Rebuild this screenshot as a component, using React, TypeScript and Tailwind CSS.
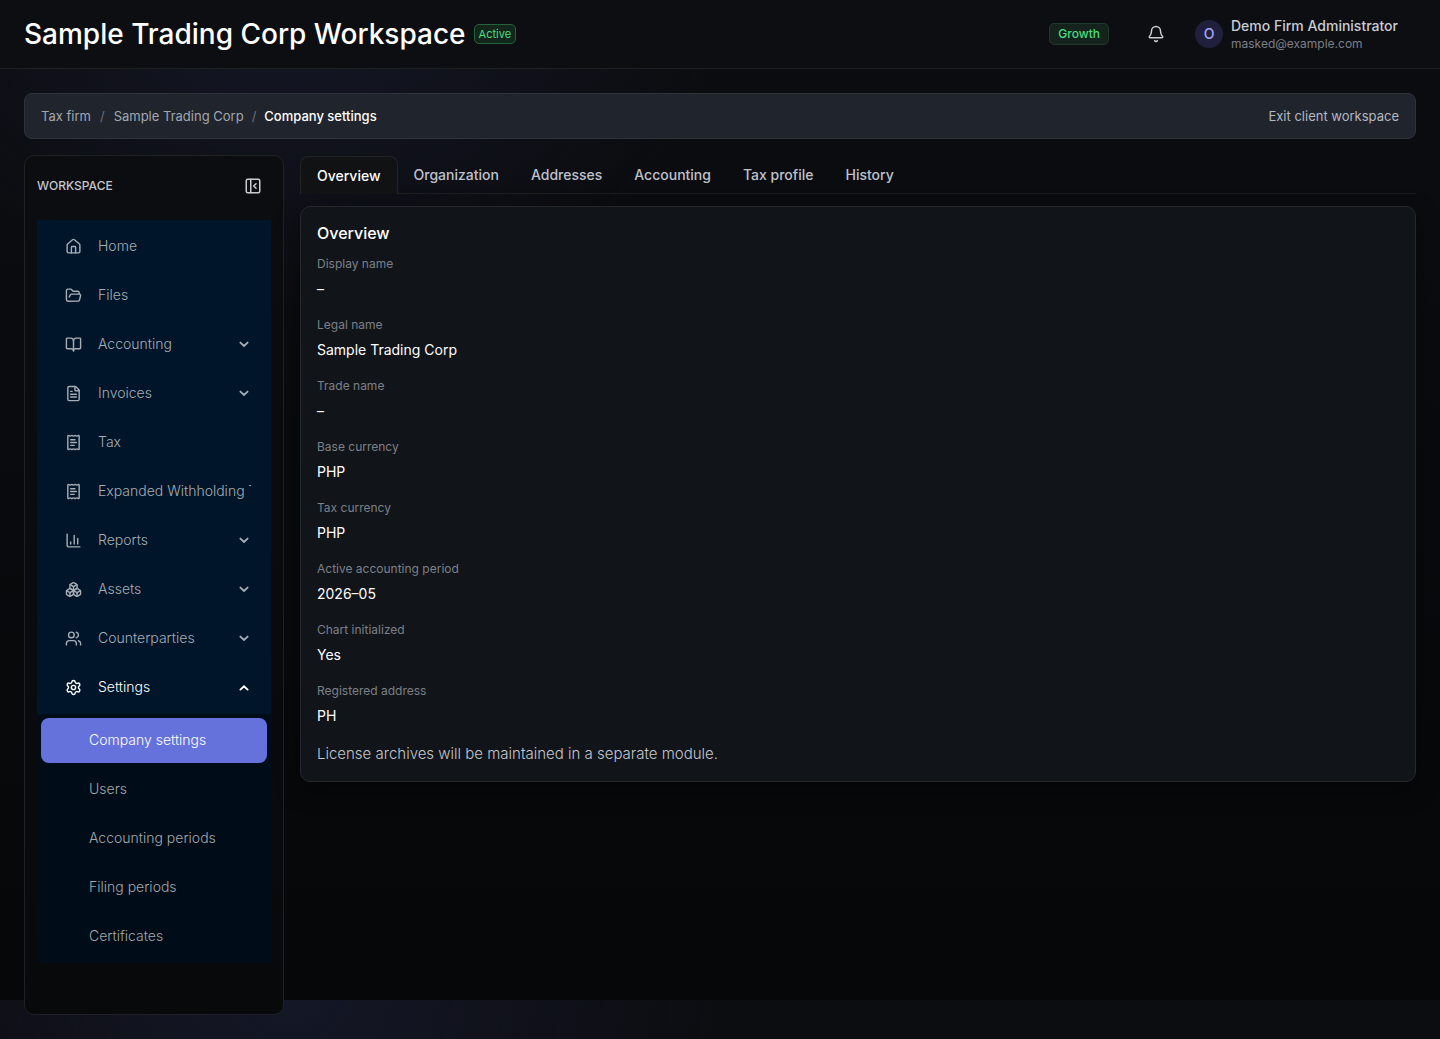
import {
  Bell,
  BookOpen,
  Boxes,
  ChartColumn,
  FileText,
  FolderOpen,
  House,
  PanelLeftClose,
  ReceiptText,
  Settings,
  Users,
  type LucideIcon,
} from 'lucide-react';

interface MenuEntry {
  label: string;
  icon: LucideIcon;
  expandable?: boolean;
  open?: boolean;
}

const menu: MenuEntry[] = [
  { label: 'Home', icon: House },
  { label: 'Files', icon: FolderOpen },
  { label: 'Accounting', icon: BookOpen, expandable: true },
  { label: 'Invoices', icon: FileText, expandable: true },
  { label: 'Tax', icon: ReceiptText },
  { label: 'Expanded Withholding Tax', icon: ReceiptText },
  { label: 'Reports', icon: ChartColumn, expandable: true },
  { label: 'Assets', icon: Boxes, expandable: true },
  { label: 'Counterparties', icon: Users, expandable: true },
  { label: 'Settings', icon: Settings, expandable: true, open: true },
];

const settingsMenu = ['Company settings', 'Users', 'Accounting periods', 'Filing periods', 'Certificates'];

const tabs = ['Overview', 'Organization', 'Addresses', 'Accounting', 'Tax profile', 'History'];

const details = [
  { label: 'Display name', value: '–' },
  { label: 'Legal name', value: 'Sample Trading Corp' },
  { label: 'Trade name', value: '–' },
  { label: 'Base currency', value: 'PHP' },
  { label: 'Tax currency', value: 'PHP' },
  { label: 'Active accounting period', value: '2026–05' },
  { label: 'Chart initialized', value: 'Yes' },
  { label: 'Registered address', value: 'PH' },
];

function Arrow({ open }: { open?: boolean }) {
  return (
    <svg viewBox="0 0 10 10" className="w-[10px] h-[10px] mr-[2px] shrink-0" fill="none" stroke="currentColor" strokeWidth="1.9" strokeLinecap="round">
      {open ? <path d="M1.4 7.6 5 4.2l3.6 3.4" /> : <path d="M1.4 3.6 5 6.9l3.6-3.3" />}
    </svg>
  );
}

function Header() {
  return (
    <header className="flex items-center justify-between h-[69px] px-6 bg-[#0d0e12] border-b border-[#1e2023]">
      <div className="flex items-center gap-2">
        <h1 className="text-[28px] leading-9 font-medium text-white">Sample Trading Corp Workspace</h1>
        <span className="px-1 text-[11px] leading-[18px] rounded-[5px] border border-[#236339] bg-[#13261c] text-[#4ade80]">
          Active
        </span>
      </div>
      <div className="flex items-center pr-4">
        <span className="px-2 text-xs leading-5 font-medium rounded-[5px] border border-[#20382b] bg-[#14241c] text-[#4ade80]">
          Growth
        </span>
        <button type="button" aria-label="Notifications" className="ml-[38px] text-[#c9ccd3]">
          <Bell size={18} strokeWidth={2} />
        </button>
        <button type="button" className="flex items-center gap-2 ml-[30px] text-left">
          <span className="flex items-center justify-center w-7 h-7 rounded-full bg-[#20203c] text-sm font-medium text-[#a5a8f8]">
            O
          </span>
          <span className="block min-w-[169px] pt-[2px]">
            <span className="block text-sm leading-[18px] font-medium text-[#c9ccd3]">Demo Firm Administrator</span>
            <span className="block text-xs leading-[18px] text-[#7c8088]">masked@example.com</span>
          </span>
        </button>
      </div>
    </header>
  );
}

function Breadcrumbs() {
  return (
    <div className="flex items-center justify-between h-[46px] px-4 pt-[2px] rounded-lg border border-[#2d323b] bg-[#20242d] text-[13px]">
      <nav aria-label="Breadcrumb" className="flex items-center gap-2 text-[#a3a7b0]">
        <a href="#firm">Tax firm</a>
        <span className="px-px text-[#6b7079]">/</span>
        <a href="#company">Sample Trading Corp</a>
        <span className="text-[#6b7079]">/</span>
        <span className="font-medium text-white">Company settings</span>
      </nav>
      <a href="#exit" className="text-[#b4b8c0]">
        Exit client workspace
      </a>
    </div>
  );
}

function Sidebar() {
  return (
    <aside className="w-[260px] shrink-0 p-3 rounded-[10px] border border-[#1f2124] bg-gradient-to-b from-[#0c0d11] to-[#08090b]">
      <div className="flex items-center justify-between h-9 mb-4 pr-[9px]">
        <span className="text-xs font-medium text-[#c3c6cd]">WORKSPACE</span>
        <button type="button" aria-label="Collapse sidebar" className="text-[#c9ccd3]">
          <PanelLeftClose size={18} strokeWidth={2} />
        </button>
      </div>
      <nav aria-label="Workspace" className="text-sm">
        <ul className="flex flex-col gap-1 py-1 px-1 bg-[#001529]">
          {menu.map(({ label, icon: Icon, expandable, open }) => (
            <li key={label}>
              <button
                type="button"
                aria-expanded={expandable ? Boolean(open) : undefined}
                className={`flex items-center w-full h-[45px] pb-px pl-6 pr-4 text-left ${open ? 'text-white' : 'text-[#a6adb4]'}`}
              >
                <Icon size={17} strokeWidth={2} className="shrink-0" />
                <span className="flex-1 min-w-0 ml-4 overflow-hidden whitespace-nowrap font-light">{label}</span>
                {expandable && <Arrow open={open} />}
              </button>
            </li>
          ))}
        </ul>
        <ul className="flex flex-col gap-1 py-1 px-1 bg-[#000c17]">
          {settingsMenu.map((label, i) => (
            <li key={label}>
              <a
                href={`#${label.toLowerCase().replace(' ', '-')}`}
                className={`flex items-center h-[45px] pb-px pl-12 rounded-lg font-light ${i === 0 ? 'bg-[#6672dc] text-white' : 'text-[#a6a9ad]'}`}
              >
                {label}
              </a>
            </li>
          ))}
        </ul>
      </nav>
    </aside>
  );
}

function Tabs() {
  return (
    <div role="tablist" className="flex h-[39px] pt-px border-b border-[#1c1e20] text-sm font-medium">
      {tabs.map((tab, i) => (
        <button
          key={tab}
          type="button"
          role="tab"
          aria-selected={i === 0}
          className={
            i === 0
              ? 'h-[38px] px-4 rounded-t-lg border border-b-0 border-[#212325] bg-[#101214] text-white'
              : 'h-[38px] px-4 text-[#bfc2cb]'
          }
        >
          {tab}
        </button>
      ))}
    </div>
  );
}

function OverviewCard() {
  return (
    <section className="mt-3 px-4 pt-4 pb-[15px] rounded-[10px] border border-[#24272c] bg-[#111419] shadow-[0_8px_24px_rgba(0,0,0,0.4)]">
      <h2 className="text-base leading-5 font-medium text-white">Overview</h2>
      <dl className="mt-2 mb-[3px]">
        {details.map(({ label, value }) => (
          <div key={label} className="h-[61px] pt-[3px]">
            <dt className="text-xs leading-5 text-[#7c8088]">{label}</dt>
            <dd className="mt-[3px] text-sm leading-6 text-white">{value}</dd>
          </div>
        ))}
      </dl>
      <p className="text-[15px] leading-6 font-light text-[#c4c7cf]">License archives will be maintained in a separate module.</p>
    </section>
  );
}

export default function App() {
  return (
    <div className="flex flex-col min-h-screen font-['Inter',sans-serif] bg-[#08090b] bg-[radial-gradient(ellipse_430px_330px_at_290px_0px,#141726,transparent),linear-gradient(#0c0d11,#060708)] bg-[length:100%_1000px]">
      <Header />
      <main className="flex flex-col flex-1 gap-4 p-6">
        <Breadcrumbs />
        <div className="flex flex-1 gap-4">
          <Sidebar />
          <div className="flex-1 min-w-0">
            <Tabs />
            <OverviewCard />
          </div>
        </div>
      </main>
    </div>
  );
}
